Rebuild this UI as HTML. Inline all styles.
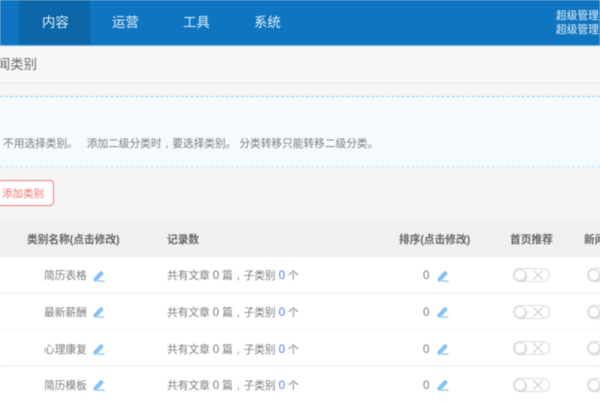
<!DOCTYPE html>
<html lang="zh"><head><meta charset="utf-8"><title>新闻类别</title>
<style>
html,body{margin:0;padding:0}
body{width:600px;height:400px;overflow:hidden;position:relative;background:#f5f5f5;font-family:"Liberation Sans","Noto Sans CJK SC",sans-serif;color:#777}
.a{position:absolute;white-space:nowrap}
.blur{position:absolute;left:0;top:0;width:600px;height:400px;filter:blur(.45px)}
.nav{color:#e3f0fa;font-size:13.4px;line-height:16px;top:15px}
.th{top:233px;font-size:10.7px;line-height:14px;font-weight:bold;color:#636363}
.row{position:absolute;left:0;width:600px;height:35px;background:#fff}
.t{font-size:10.7px;line-height:14px;color:#7a7a7a}
.t b{font-weight:normal;font-size:11.6px}
.c{display:inline-block;width:10.7px;text-align:center}
.n{color:#4d7cf5}
.sw{position:absolute;width:35px;height:12px;border:1px solid #ddd;border-radius:7px;background:#fff}
.sw i{position:absolute;left:0;top:0;width:12px;height:12px;border-radius:50%;border:1px solid #d8d8d8;box-sizing:border-box;box-shadow:1px 1px 1px #d4d4d4}
.sw svg{position:absolute;left:18px;top:1px}
svg.p{position:absolute}
</style></head>
<body><div class="blur">
<div class="a" style="left:0;top:0;width:600px;height:45px;background:#1075c0"></div>
<div class="a" style="left:19px;top:0;width:71px;height:45px;background:#0c66a8"></div>
<div class="a" style="left:0;top:45px;width:600px;height:1px;background:#6db0e2"></div>
<div class="a nav" style="left:42px">内容</div>
<div class="a nav" style="left:112px">运营</div>
<div class="a nav" style="left:183px">工具</div>
<div class="a nav" style="left:254px">系统</div>
<div class="a" style="left:556px;top:9px;font-size:10.7px;line-height:14.4px;color:#e8f2fa">超级管理员<br>超级管理员</div>

<div class="a" style="left:0;top:46px;width:600px;height:36px;background:#f8f8f8;border-bottom:1px solid #e6e6e6"></div>
<div class="a" style="left:-16.5px;top:56px;font-size:13.4px;line-height:18px;color:#666">新闻类别</div>

<div class="a" style="left:0;top:96px;width:600px;height:69px;background:#f5faff;border-top:1px dashed #8ccbff;border-bottom:1px dashed #bfe0ff"></div>
<div class="a t" style="left:3px;top:137px">不用选择类别。&nbsp;&nbsp; 添加二级分类时<span class="c">,</span>要选择类别。 分类转移只能转移二级分类。</div>

<div class="a" style="left:-10px;top:180px;width:62px;height:24px;border:1px solid #f07a7a;border-radius:4px;background:#fff"></div>
<div class="a" style="left:2px;top:187px;font-size:10.5px;line-height:14px;color:#f07070">添加类别</div>

<div class="a" style="left:0;top:220px;width:600px;height:37px;background:#f0f0f0"></div>
<div class="a th" style="left:27px">类别名称(点击修改)</div>
<div class="a th" style="left:167px">记录数</div>
<div class="a th" style="left:399px">排序(点击修改)</div>
<div class="a th" style="left:510px">首页推荐</div>
<div class="a th" style="left:584px">新闻</div>

<div class="row" style="top:257px"></div>
<div class="row" style="top:294px"></div>
<div class="row" style="top:330px"></div>
<div class="row" style="top:367px"></div>

<div class="a t" style="left:44px;top:269px">简历表格</div>
<div class="a t" style="left:44px;top:306px">最新薪酬</div>
<div class="a t" style="left:44px;top:343px">心理康复</div>
<div class="a t" style="left:44px;top:379px">简历模板</div>

<div class="a t" style="left:167px;top:269px">共有文章 <b>0</b> 篇<span class="c">,</span>子类别 <b class="n">0</b> 个</div>
<div class="a t" style="left:167px;top:306px">共有文章 <b>0</b> 篇<span class="c">,</span>子类别 <b class="n">0</b> 个</div>
<div class="a t" style="left:167px;top:343px">共有文章 <b>0</b> 篇<span class="c">,</span>子类别 <b class="n">0</b> 个</div>
<div class="a t" style="left:167px;top:379px">共有文章 <b>0</b> 篇<span class="c">,</span>子类别 <b class="n">0</b> 个</div>

<div class="a t" style="left:423px;top:269px"><b>0</b></div>
<div class="a t" style="left:423px;top:306px"><b>0</b></div>
<div class="a t" style="left:423px;top:343px"><b>0</b></div>
<div class="a t" style="left:423px;top:379px"><b>0</b></div>

<svg class="p" style="left:93px;top:270px" width="12" height="12" viewBox="0 0 12 12"><path d="M.5 11.5V8.500L7 1.500Q8 .5 9 1.500L10 2.500Q11 3.500 10 4.500L3.500 11.500ZM5 10.500H11.500V11.800H4Z" fill="#86c1f2"/></svg>
<svg class="p" style="left:93px;top:306px" width="12" height="12" viewBox="0 0 12 12"><path d="M.5 11.5V8.500L7 1.500Q8 .5 9 1.500L10 2.500Q11 3.500 10 4.500L3.500 11.500ZM5 10.500H11.500V11.800H4Z" fill="#86c1f2"/></svg>
<svg class="p" style="left:93px;top:343px" width="12" height="12" viewBox="0 0 12 12"><path d="M.5 11.5V8.500L7 1.500Q8 .5 9 1.500L10 2.500Q11 3.500 10 4.500L3.500 11.500ZM5 10.500H11.500V11.800H4Z" fill="#86c1f2"/></svg>
<svg class="p" style="left:93px;top:379px" width="12" height="12" viewBox="0 0 12 12"><path d="M.5 11.5V8.500L7 1.500Q8 .5 9 1.500L10 2.500Q11 3.500 10 4.500L3.500 11.500ZM5 10.500H11.500V11.800H4Z" fill="#86c1f2"/></svg>
<svg class="p" style="left:437px;top:270px" width="12" height="12" viewBox="0 0 12 12"><path d="M.5 11.5V8.500L7 1.500Q8 .5 9 1.500L10 2.500Q11 3.500 10 4.500L3.500 11.500ZM5 10.500H11.500V11.800H4Z" fill="#86c1f2"/></svg>
<svg class="p" style="left:437px;top:306px" width="12" height="12" viewBox="0 0 12 12"><path d="M.5 11.5V8.500L7 1.500Q8 .5 9 1.500L10 2.500Q11 3.500 10 4.500L3.500 11.500ZM5 10.500H11.500V11.800H4Z" fill="#86c1f2"/></svg>
<svg class="p" style="left:437px;top:343px" width="12" height="12" viewBox="0 0 12 12"><path d="M.5 11.5V8.500L7 1.500Q8 .5 9 1.500L10 2.500Q11 3.500 10 4.500L3.500 11.500ZM5 10.500H11.500V11.800H4Z" fill="#86c1f2"/></svg>
<svg class="p" style="left:437px;top:379px" width="12" height="12" viewBox="0 0 12 12"><path d="M.5 11.5V8.500L7 1.500Q8 .5 9 1.500L10 2.500Q11 3.500 10 4.500L3.500 11.500ZM5 10.500H11.500V11.800H4Z" fill="#86c1f2"/></svg>

<div class="sw" style="left:513px;top:268px"><i></i><svg width="12" height="10" viewBox="0 0 12 10"><path d="M1 0 11 10M11 0 1 10" stroke="#ccc" fill="none"/></svg></div>
<div class="sw" style="left:513px;top:305px"><i></i><svg width="12" height="10" viewBox="0 0 12 10"><path d="M1 0 11 10M11 0 1 10" stroke="#ccc" fill="none"/></svg></div>
<div class="sw" style="left:513px;top:341px"><i></i><svg width="12" height="10" viewBox="0 0 12 10"><path d="M1 0 11 10M11 0 1 10" stroke="#ccc" fill="none"/></svg></div>
<div class="sw" style="left:513px;top:378px"><i></i><svg width="12" height="10" viewBox="0 0 12 10"><path d="M1 0 11 10M11 0 1 10" stroke="#ccc" fill="none"/></svg></div>
<div class="sw" style="left:587px;top:268px"><i></i></div>
<div class="sw" style="left:587px;top:305px"><i></i></div>
<div class="sw" style="left:587px;top:341px"><i></i></div>
<div class="sw" style="left:587px;top:378px"><i></i></div>
</div></body></html>
